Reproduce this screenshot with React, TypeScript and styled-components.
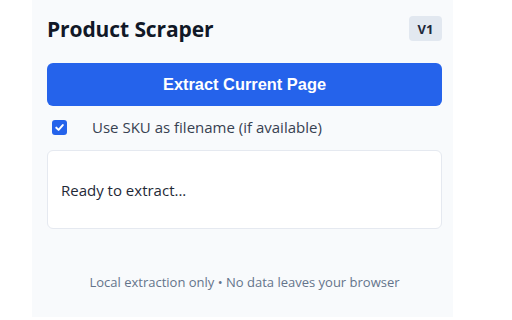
import React, { useState } from 'react';
import styled, { createGlobalStyle } from 'styled-components';

const GlobalStyle = createGlobalStyle`
  html, body {
    margin: 0;
    padding: 0;
    background: #ffffff;
  }
  body {
    font-family: "Open Sans", "Noto Sans", sans-serif;
    color: #1e293b;
  }
`;

const App: React.FC = () => {
  const [useSku, setUseSku] = useState(true);

  return (
    <>
      <GlobalStyle />
      <Panel>
        <Header>
          <Title>Product Scraper</Title>
          <Badge>V1</Badge>
        </Header>
        <ExtractButton type="button">Extract Current Page</ExtractButton>
        <OptionRow onClick={() => setUseSku(!useSku)}>
          <Check checked={useSku}>
            {useSku && (
              <svg width="11" height="11" viewBox="0 0 12 12">
                <path d="M2.5 6.2 L5 8.6 L9.6 3.4" fill="none" stroke="#fff" strokeWidth="2.2" strokeLinecap="round" strokeLinejoin="round" />
              </svg>
            )}
          </Check>
          <OptionLabel>Use SKU as filename (if available)</OptionLabel>
        </OptionRow>
        <StatusBox>Ready to extract...</StatusBox>
        <Footer>Local extraction only • No data leaves your browser</Footer>
      </Panel>
    </>
  );
};

export default App;

const Panel = styled.div`
  box-sizing: border-box;
  margin-left: 32px;
  width: 421px;
  height: 317px;
  padding: 16px 11px 0 15px;
  background: #f8fafc;
  display: flex;
  flex-direction: column;
`;
const Header = styled.div`
  display: flex;
  justify-content: space-between;
  align-items: center;
  height: 25px;
  margin-bottom: 22px;
`;
const Title = styled.h1`
  margin: 0;
  font-size: 21px;
  font-weight: 700;
  color: #111827;
  letter-spacing: -0.1px;
`;
const Badge = styled.span`
  display: flex;
  align-items: center;
  justify-content: center;
  width: 33px;
  height: 25px;
  border-radius: 4px;
  background: #e2e8f0;
  font-size: 13px;
  font-weight: 700;
  color: #1e293b;
`;
const ExtractButton = styled.button`
  height: 43px;
  border: none;
  border-radius: 6px;
  background: #2563eb;
  color: #ffffff;
  font-family: "Liberation Sans", Arial, sans-serif;
  font-size: 16.4px;
  font-weight: 700;
  cursor: pointer;
`;
const OptionRow = styled.label`
  display: flex;
  align-items: center;
  gap: 25px;
  margin-top: 13px;
  padding-left: 5px;
  height: 16px;
  cursor: pointer;
`;
const Check = styled.span<{ checked: boolean }>`
  display: flex;
  align-items: center;
  justify-content: center;
  width: 15px;
  height: 15px;
  box-sizing: border-box;
  border-radius: 3px;
  background: ${(p) => (p.checked ? '#2563eb' : '#ffffff')};
  border: ${(p) => (p.checked ? 'none' : '1px solid #767676')};
`;
const OptionLabel = styled.span`
  font-size: 15px;
  color: #374151;
`;
const StatusBox = styled.div`
  box-sizing: border-box;
  margin-top: 15px;
  height: 79px;
  display: flex;
  align-items: center;
  padding: 0 13px;
  background: #ffffff;
  border: 1px solid #e5e9f0;
  border-radius: 6px;
  font-size: 15px;
  color: #1f2937;
`;
const Footer = styled.div`
  margin-top: 44px;
  text-align: center;
  font-size: 13px;
  color: #64748b;
`;
